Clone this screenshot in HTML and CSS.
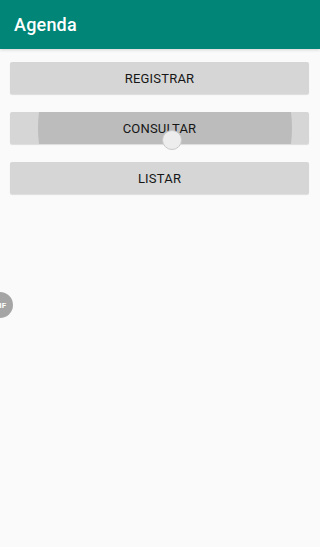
FILE: index.html
```html
<!DOCTYPE html>
<html lang="es">
<head>
    <meta charset="UTF-8">
    <meta name="viewport" content="width=device-width, initial-scale=1.0">
    <title>Agenda</title>
    <link rel="stylesheet" href="styles.css">
</head>
<body>
    <div class="toolbar">
        <h1>Agenda</h1>
    </div>

    <div class="content">
        <button class="btn">REGISTRAR</button>
        <button class="btn pressed">
            <span class="ripple"></span>
            <span class="label">CONSULTAR</span>
            <span class="touch"></span>
        </button>
        <button class="btn">LISTAR</button>
    </div>

    <div class="gif-badge">GIF</div>
</body>
</html>
```

FILE: styles.css
```css
body { margin: 0; background: #fafafa; font-family: Roboto, "Noto Sans", sans-serif; height: 547px; overflow: hidden; position: relative; }
.toolbar { background: #008577; height: 49px; display: flex; align-items: center; padding: 0 14px; box-shadow: 0 1px 3px rgba(0,0,0,0.15); }
.toolbar h1 { margin: 0; color: white; font-size: 18px; font-weight: 500; letter-spacing: 0.2px; }
.content { display: flex; flex-direction: column; gap: 18px; padding: 13px 11px 0 10px; }
.btn { position: relative; height: 32px; border: none; border-radius: 2px; background: #d6d6d6; box-shadow: 0 1px 1px rgba(0,0,0,0.12); font-family: inherit; font-size: 13px; color: #161616; letter-spacing: 0.2px; padding: 0; }
.pressed .label { position: relative; }
.ripple { position: absolute; left: 28px; right: 17px; top: -110px; bottom: -110px; background: #bcbcbc; border-radius: 50%; clip-path: inset(110px 0 110px 0); }
.touch { position: absolute; left: 152px; top: 18px; width: 18px; height: 18px; border-radius: 50%; background: #ededed; border: 1px solid #c8c8c8; }
.gif-badge { position: absolute; left: -13px; top: 292px; width: 26px; height: 26px; border-radius: 50%; background: #a5a5a5; color: white; font-size: 8px; font-weight: 700; display: flex; align-items: center; justify-content: center; }
```
